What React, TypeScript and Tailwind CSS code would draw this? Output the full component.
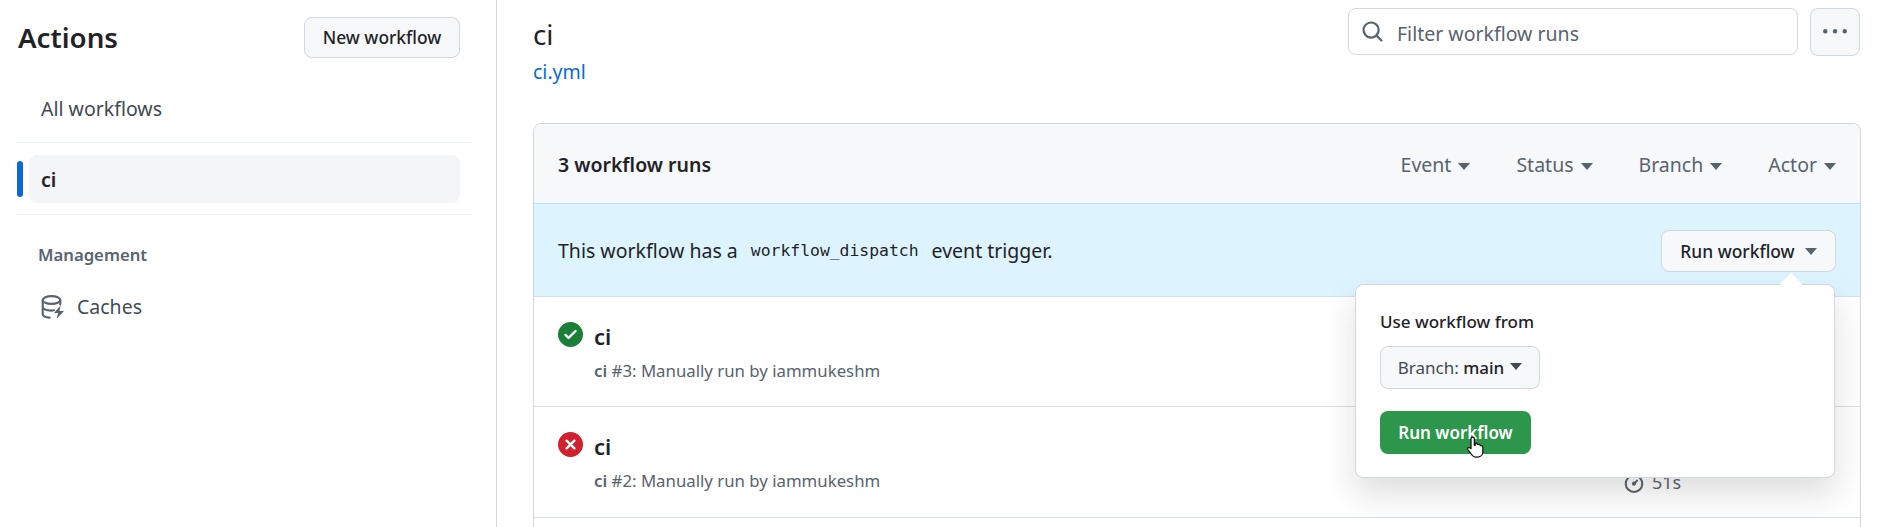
import type { ReactNode } from "react";

function Oct({ className, children }: { className: string; children: ReactNode }) {
  return (
    <svg viewBox="0 0 16 16" className={className} fill="currentColor">
      {children}
    </svg>
  );
}

function Caret({ className = "" }: { className?: string }) {
  return (
    <svg viewBox="0 0 12 7" className={`w-[12px] h-[7px] ${className}`} fill="currentColor">
      <path d="M0 0h12L6 7z" />
    </svg>
  );
}

function CacheIcon() {
  return (
    <svg viewBox="0 0 24 24" className="w-[24px] h-[24px] text-[#59636e]" fill="none" stroke="currentColor" strokeWidth="2.1" strokeLinecap="round">
      <ellipse cx="10.5" cy="5" rx="8.8" ry="3.9" />
      <path d="M1.7 5v14c0 2 3 3.4 7 3.6M1.7 12c0 2 3.5 3.6 8.3 3.6 1.2 0 2-.1 3-.3M19.3 5v4.5" />
      <path d="M19.5 10.5 13 18h4.2l-1.7 6L23 16h-4.5l1-5.5z" fill="currentColor" stroke="none" />
    </svg>
  );
}

function Filter({ label }: { label: string }) {
  return (
    <div className="flex items-center gap-[7px] text-[#59636e]">
      <span>{label}</span>
      <Caret className="mt-[2px]" />
    </div>
  );
}

function Run({ ok, num, last }: { ok: boolean; num: number; last?: boolean }) {
  return (
    <div className={`border-t border-[#d8dee4] pl-[24px] pt-[26px] flex gap-[11px] shrink-0 ${last ? "h-[111px]" : "h-[110px]"}`}>
      {ok ? (
        <Oct className="w-[25px] h-[25px] text-[#1a7f37] shrink-0 -mt-[1px]">
          <path d="M8 16A8 8 0 1 1 8 0a8 8 0 0 1 0 16Zm3.78-9.72a.751.751 0 0 0-.018-1.042.751.751 0 0 0-1.042-.018L6.75 9.19 5.28 7.72a.751.751 0 0 0-1.042.018.751.751 0 0 0-.018 1.042l2 2a.75.75 0 0 0 1.06 0Z" />
        </Oct>
      ) : (
        <Oct className="w-[25px] h-[25px] text-[#cf222e] shrink-0 -mt-[1px]">
          <path d="M2.343 13.657A8 8 0 1 1 13.658 2.343 8 8 0 0 1 2.343 13.657ZM6.03 4.97a.751.751 0 0 0-1.042.018.751.751 0 0 0-.018 1.042L6.94 8 4.97 9.97a.749.749 0 0 0 .326 1.275.749.749 0 0 0 .734-.215L8 9.06l1.97 1.97a.749.749 0 0 0 1.275-.326.749.749 0 0 0-.215-.734L9.06 8l1.97-1.97a.749.749 0 0 0-.326-1.275.749.749 0 0 0-.734.215L8 6.94Z" />
        </Oct>
      )}
      <div className="flex-1">
        <div className="text-[22px] leading-[28px] font-semibold text-[#1f2328] -mt-[1px]">ci</div>
        <div className="text-[16.8px] leading-[24px] text-[#59636e] mt-[9px]">
          <span className="font-semibold">ci</span> #{num}: Manually run by iammukeshm
        </div>
      </div>
      {last && (
        <div className="flex items-center gap-[7px] text-[18px] leading-[22px] text-[#59636e] mr-[157px] mt-[38px] self-start w-[80px]">
          <Oct className="w-[22px] h-[22px]">
            <path d="M5.75.75A.75.75 0 0 1 6.5 0h3a.75.75 0 0 1 0 1.5h-.75v1l-.001.041a6.724 6.724 0 0 1 3.464 1.435l.007-.006.75-.75a.749.749 0 0 1 1.275.326.749.749 0 0 1-.215.734l-.75.75-.006.007a6.75 6.75 0 1 1-10.548 0L2.72 4.53l-.75-.75a.749.749 0 0 1 .326-1.275.749.749 0 0 1 .734.215l.75.75.007.006A6.72 6.72 0 0 1 7.25 2.541V1.5H6.5a.75.75 0 0 1-.75-.75ZM8 14.5a5.25 5.25 0 1 0-.001-10.501A5.25 5.25 0 0 0 8 14.5Zm.389-6.7 1.33-1.33a.75.75 0 1 1 1.061 1.06L9.45 8.861A1.503 1.503 0 0 1 8 10.75a1.499 1.499 0 1 1 .389-2.95Z" />
          </Oct>
          <span>51s</span>
        </div>
      )}
    </div>
  );
}

export default function App() {
  return (
    <div className="w-[1885px] h-[527px] overflow-hidden flex bg-white text-[#1f2328] text-[19.5px] font-['Noto_Sans',sans-serif]">
      <aside className="w-[497px] h-full border-r border-[#d0d7de] shrink-0 pl-[17px] pr-[24px] pt-[17px]">
        <div className="flex items-center justify-between pr-[12px] h-[40px]">
          <h1 className="text-[27.7px] font-semibold leading-[40px] ml-[1px]">Actions</h1>
          <button className="w-[156px] h-[41px] rounded-[8px] border border-[#d0d7de] bg-[#f6f8fa] text-[17.4px] font-medium">New workflow</button>
        </div>
        <div className="mt-[16px] h-[70px] border-b border-[#eaeef2] pl-[24px] pt-[24px] text-[#424a53] leading-[24px]">All workflows</div>
        <div className="h-[72px] border-b border-[#eaeef2] flex items-center gap-[6px]">
          <div className="w-[6px] h-[36px] rounded-[4px] bg-[#0969da]" />
          <div className="w-[431px] h-[48px] rounded-[8px] bg-[#f3f5f7] flex items-center pl-[12px] pt-[2px] font-semibold">ci</div>
        </div>
        <div className="mt-[29px] pl-[21px] text-[16.7px] leading-[22px] font-semibold text-[#59636e]">Management</div>
        <div className="mt-[26px] pl-[24px] flex items-center gap-[12px] text-[#424a53]">
          <CacheIcon />
          <span>Caches</span>
        </div>
      </aside>
      <main className="flex-1 min-w-0 pl-[36px] pr-[24px]">
        <div className="flex justify-between h-[123px]">
          <div>
            <div className="text-[27.7px] leading-[36px] mt-[16px]">ci</div>
            <div className="text-[19.5px] leading-[24px] text-[#0969da] mt-[8px]">ci.yml</div>
          </div>
          <div className="flex gap-[12px] mt-[8px] mr-[1px] h-[48px]">
            <div className="w-[450px] h-[47px] rounded-[8px] border border-[#d0d7de] bg-white flex items-center pl-[12px] gap-[13px] text-[#59636e]">
              <Oct className="w-[23px] h-[23px]">
                <path d="M10.68 11.74a6 6 0 0 1-7.922-8.982 6 6 0 0 1 8.982 7.922l3.04 3.04a.749.749 0 0 1-.326 1.275.749.749 0 0 1-.734-.215ZM11.5 7a4.499 4.499 0 1 0-8.997 0A4.499 4.499 0 0 0 11.5 7Z" />
              </Oct>
              <span className="pt-[4px]">Filter workflow runs</span>
            </div>
            <button className="w-[50px] h-[48px] rounded-[8px] border border-[#d0d7de] bg-[#f6f8fa] flex items-center justify-center text-[#59636e]">
              <Oct className="w-[24px] h-[24px]">
                <path d="M8 9a1.5 1.5 0 1 0 0-3 1.5 1.5 0 0 0 0 3ZM1.5 9a1.5 1.5 0 1 0 0-3 1.5 1.5 0 0 0 0 3Zm13 0a1.5 1.5 0 1 0 0-3 1.5 1.5 0 0 0 0 3Z" />
              </Oct>
            </button>
          </div>
        </div>
        <section className="border border-[#d0d7de] rounded-t-[8px] h-[420px] flex flex-col relative">
          <div className="h-[79px] bg-[#f6f8fa] rounded-t-[8px] flex items-center justify-between px-[24px] pt-[3px] shrink-0">
            <div className="font-semibold">3 workflow runs</div>
            <div className="flex gap-[46px]">
              <Filter label="Event" />
              <Filter label="Status" />
              <Filter label="Branch" />
              <Filter label="Actor" />
            </div>
          </div>
          <div className="h-[93px] bg-[#ddf4ff] border-t border-[#b6e3ff] flex items-center justify-between px-[24px] pt-[2px] shrink-0">
            <div className="flex items-center">
              This workflow has a
              <code className="mx-[13px] text-[16.4px] font-['DejaVu_Sans_Mono',monospace]">workflow_dispatch</code>
              event trigger.
            </div>
            <button className="w-[175px] h-[42px] rounded-[8px] border border-[#d0d7de] bg-[#f6f8fa] flex items-center justify-center gap-[10px] text-[17.4px] font-medium">
              Run workflow
              <Caret className="text-[#59636e]" />
            </button>
          </div>
          <Run ok num={3} />
          <Run ok={false} num={2} last />
          <div className="h-[20px] border-t border-[#d8dee4]" />

          <div className="absolute left-[821px] top-[160px] w-[480px] h-[194px] rounded-[8px] border border-[#d0d7de] bg-white shadow-[0_16px_32px_rgba(31,35,40,0.15)] pl-[24px] pt-[25px] z-10">
            <div className="absolute right-[35px] top-[-9px] w-[16px] h-[16px] rotate-45 bg-white" />
            <div className="text-[17px] leading-[24px] font-medium">Use workflow from</div>
            <button className="mt-[12px] w-[160px] h-[43px] rounded-[8px] border border-[#d0d7de] bg-[#f6f8fa] flex items-center justify-center gap-[6px] text-[17px] text-[#424a53]">
              <span>Branch: <span className="font-medium text-[#1f2328]">main</span></span>
              <Caret className="text-[#424a53] mb-[2px]" />
            </button>
            <button className="mt-[22px] w-[151px] h-[43px] rounded-[8px] bg-[#2c974b] text-white text-[17px] font-semibold">Run workflow</button>
            <svg viewBox="0 0 24 28" className="absolute left-[110px] top-[150px] w-[20px] h-[24px]">
              <path d="M8 2c1.5 0 2 1 2 2v8l1-.2V9.6c1.6-.6 2.6 0 2.6 1.4l1-.2c1.4-.3 2.4.3 2.4 1.6l1-.1c1.4 0 2.2.9 2.2 2.2V20c0 3-2 6-6 6h-3c-3 0-4-2-6-5l-3-4c-1-1.6 1-3 2.5-2L6 16V4c0-1 .6-2 2-2z" fill="#fff" stroke="#111" strokeWidth="1.5" strokeLinejoin="round" />
            </svg>
          </div>
        </section>
      </main>
    </div>
  );
}
